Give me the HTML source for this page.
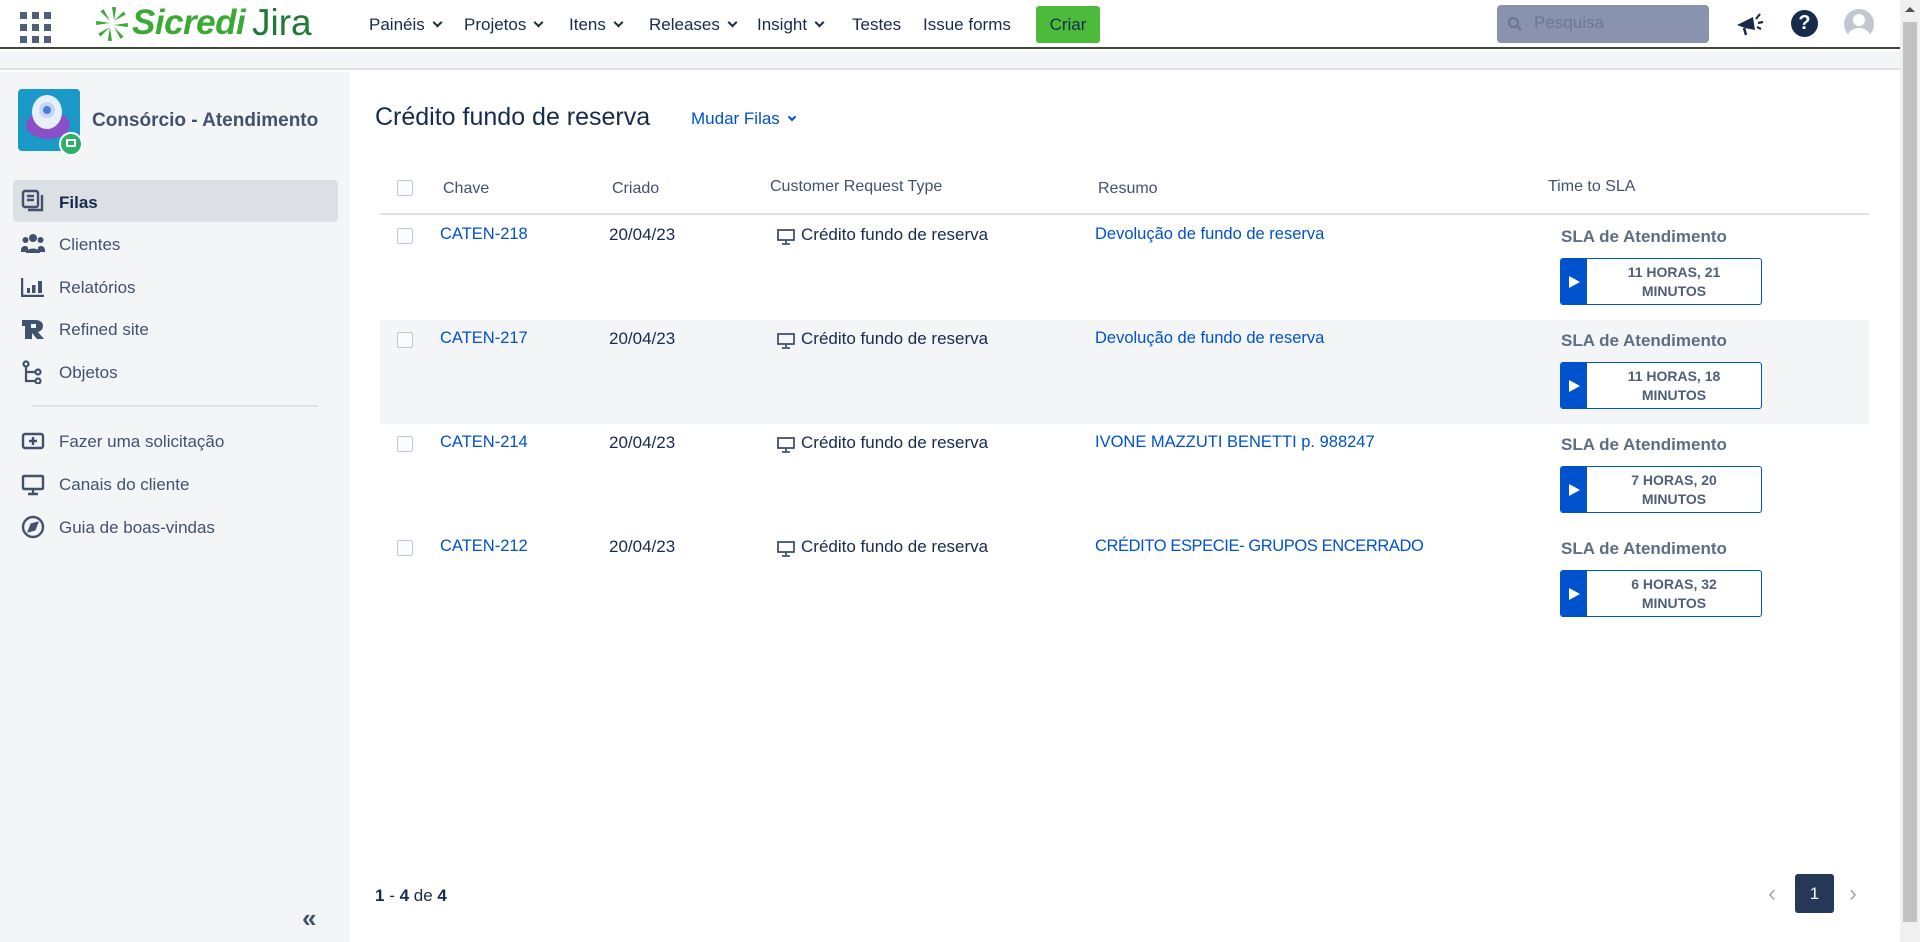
<!DOCTYPE html>
<html><head><meta charset="utf-8"><style>
*{box-sizing:border-box;margin:0;padding:0}
body{width:1920px;height:942px;overflow:hidden;background:#fff;font-family:"Liberation Sans",sans-serif;color:#172b4d;position:relative}
.a{position:absolute;white-space:nowrap}
.nav{font-size:17px;color:#172b4d;top:15px}
.chev{display:inline-block;width:7px;height:7px;border-right:2px solid #172b4d;border-bottom:2px solid #172b4d;transform:rotate(45deg);margin-left:9px;position:relative;top:-4px}
.side{font-size:17px;color:#42526e;left:59px}
.ic{position:absolute;left:21px}
.th{font-size:16px;color:#42526e;top:179px}
.cell{font-size:17px}
.link{color:#0052cc;font-size:16.5px}
.cb{position:absolute;left:397px;width:16px;height:16px;border:1px solid #c1c7d0;border-radius:2px;background:#fafbfc}
.sla{position:absolute;left:1561px;font-size:17px;font-weight:bold;color:#5e6c84}
.box{position:absolute;left:1560px;width:202px;height:47px;border:1px solid #0052cc;border-radius:3px;background:#fff;overflow:hidden}
.box .pl{position:absolute;left:0;top:0;width:26px;height:100%;background:#0052cc}
.box .pl:after{content:"";position:absolute;left:8px;top:17px;border-left:11px solid #fff;border-top:6.5px solid transparent;border-bottom:6.5px solid transparent}
.box .t{position:absolute;left:26px;right:0;top:4px;text-align:center;font-size:14px;font-weight:bold;color:#505f79;line-height:19px;white-space:normal}
</style></head><body>
<div class="a" style="left:0;top:0;width:1900px;height:49px;background:#fff;border-bottom:2px solid #3d4a3a"></div>
<svg class="a" style="left:20px;top:12px" width="31" height="31" viewBox="0 0 31 31" fill="#505f79">
<rect x="0" y="0" width="7" height="7"/><rect x="12" y="0" width="7" height="7"/><rect x="24" y="0" width="7" height="7"/>
<rect x="0" y="12" width="7" height="7"/><rect x="12" y="12" width="7" height="7"/><rect x="24" y="12" width="7" height="7"/>
<rect x="0" y="24" width="7" height="7"/><rect x="12" y="24" width="7" height="7"/><rect x="24" y="24" width="7" height="7"/></svg>
<svg class="a" style="left:94px;top:5px" width="36" height="38" viewBox="0 0 34 36">
<g fill="#3aaa35"><path d="M17 2 l4 0 -2 13z"/><path d="M17 34 l-4 0 2 -13z"/><path d="M2 19 l0 -4 13 2z"/><path d="M32 17 l0 4 -13 -2z"/>
<path d="M6 6 l3 -2 6 11z"/><path d="M28 30 l-3 2 -6 -11z"/><path d="M6 30 l-2 -3 11 -6z"/><path d="M28 6 l2 3 -11 6z"/></g></svg>
<div class="a" style="left:132px;top:3px;font-size:35px;font-weight:bold;font-style:italic;color:#3aaa35;letter-spacing:-0.5px">Sicredi</div>
<div class="a" style="left:252px;top:2px;font-size:37px;color:#1f7a3a">Jira</div>
<div class="a nav" style="left:369px">Painéis<span class="chev"></span></div>
<div class="a nav" style="left:464px">Projetos<span class="chev"></span></div>
<div class="a nav" style="left:569px">Itens<span class="chev"></span></div>
<div class="a nav" style="left:649px">Releases<span class="chev"></span></div>
<div class="a nav" style="left:757px">Insight<span class="chev"></span></div>
<div class="a nav" style="left:852px">Testes</div>
<div class="a nav" style="left:923px">Issue forms</div>
<div class="a" style="left:1036px;top:6px;width:64px;height:37px;background:#4cbb3b;border-radius:3px;color:#172b4d;font-size:17px;text-align:center;line-height:37px">Criar</div>
<div class="a" style="left:1497px;top:5px;width:212px;height:38px;background:#8993ad;border-radius:4px"></div>
<svg class="a" style="left:1507px;top:16px" width="16" height="16" viewBox="0 0 16 16"><circle cx="6.5" cy="6.5" r="4.5" stroke="#6b7795" stroke-width="2.2" fill="none"/><path d="M10 10l4 4" stroke="#6b7795" stroke-width="2.5"/></svg>
<div class="a" style="left:1534px;top:13px;font-size:17px;color:#6b7795">Pesquisa</div>
<svg class="a" style="left:1735px;top:11px" width="30" height="26" viewBox="0 0 30 26"><path d="M2 14 L18 6 L20 19 L10 17 Z" fill="#172b4d"/><path d="M9 17 l2 7" stroke="#172b4d" stroke-width="2.5"/><path d="M21 8 l4 -5 M23 12 l5 -1 M22 16 l4 2" stroke="#172b4d" stroke-width="2.2"/></svg>
<div class="a" style="left:1791px;top:10px;width:27px;height:27px;border-radius:50%;background:#172b4d;color:#fff;font-weight:bold;font-size:20px;text-align:center;line-height:27px">?</div>
<div class="a" style="left:1844px;top:9px;width:30px;height:30px;border-radius:50%;background:#c1c7d0;overflow:hidden"><div style="position:absolute;left:9px;top:5px;width:12px;height:12px;border-radius:50%;background:#fff"></div><div style="position:absolute;left:4px;top:19px;width:22px;height:16px;border-radius:50%;background:#fff"></div></div>
<div class="a" style="left:0;top:51px;width:1900px;height:19px;background:#f4f5f7;border-bottom:2px solid #dfe1e6"></div>
<div class="a" style="left:1900px;top:0;width:20px;height:942px;background:#f0f0f0"></div>
<div class="a" style="left:1903px;top:22px;width:14px;height:900px;background:#c1c1c1"></div>
<div class="a" style="left:1905px;top:7px;border-left:5px solid transparent;border-right:5px solid transparent;border-bottom:5px solid #505050"></div>
<div class="a" style="left:0;top:72px;width:350px;height:870px;background:#f4f5f7"></div>
<div class="a" style="left:18px;top:89px;width:62px;height:62px;border-radius:4px;background:#1b9ac9;overflow:hidden">
<div style="position:absolute;left:8px;top:22px;width:44px;height:28px;border-radius:50%;background:#8b50c8"></div>
<div style="position:absolute;left:14px;top:6px;width:30px;height:34px;border-radius:50%;background:#e6f0ff"></div>
<div style="position:absolute;left:21px;top:13px;width:16px;height:16px;border-radius:50%;background:#4a7cd6;border:4px solid #c5d5f5"></div></div>
<div class="a" style="left:59px;top:132px;width:24px;height:24px;border-radius:50%;background:#2fb06a;border:2px solid #fff"><div style="position:absolute;left:5px;top:5px;width:10px;height:8px;border:2px solid #fff"></div></div>
<div class="a" style="left:92px;top:110px;font-size:19px;font-weight:bold;color:#42526e">Consórcio - Atendimento</div>
<div class="a" style="left:13px;top:180px;width:325px;height:42px;background:#dcdfe4;border-radius:4px"></div>
<svg class="ic" style="top:189px" width="24" height="24" viewBox="0 0 24 24" fill="none" stroke="#42526e" stroke-width="2.4"><rect x="2" y="2" width="15" height="16" rx="2"/><path d="M6 7h7M6 11h7M21 6v15H7"/></svg>
<div class="a side" style="top:193px;font-weight:bold;color:#172b4d">Filas</div>
<svg class="ic" style="top:233px" width="24" height="22" viewBox="0 0 24 22" fill="#42526e"><circle cx="12" cy="5" r="4"/><circle cx="4.5" cy="7" r="3"/><circle cx="19.5" cy="7" r="3"/><path d="M5 20c0-6 14-6 14 0z"/><path d="M0 17c0-5 7-5 7-2v4H0z M24 17c0-5-7-5-7-2v4h7z"/></svg>
<div class="a side" style="top:235px">Clientes</div>
<svg class="ic" style="top:277px" width="24" height="20" viewBox="0 0 24 20" fill="#42526e"><path d="M1 1v18h22" stroke="#42526e" stroke-width="2.5" fill="none"/><rect x="6" y="11" width="3" height="5"/><rect x="11" y="8" width="3.5" height="8"/><rect x="17" y="4" width="4" height="12"/></svg>
<div class="a side" style="top:278px">Relatórios</div>
<svg class="ic" style="top:317px" width="24" height="24" viewBox="0 0 24 24" fill="#42526e"><path d="M1 3h13c6 0 8 3 8 6s-2 5-5 6l6 7h-7l-5-6v6H4V9H1z"/><rect x="10" y="7" width="5" height="4" fill="#f4f5f7"/></svg>
<div class="a side" style="top:320px">Refined site</div>
<svg class="ic" style="top:360px" width="24" height="24" viewBox="0 0 24 24" fill="none" stroke="#42526e" stroke-width="2.2"><circle cx="5" cy="4" r="2.5"/><path d="M5 7v14h9M5 12h9"/><circle cx="17" cy="12" r="2.5"/><circle cx="17" cy="21" r="2.5"/></svg>
<div class="a side" style="top:363px">Objetos</div>
<div class="a" style="left:32px;top:405px;width:286px;height:2px;background:#dfe1e6"></div>
<svg class="ic" style="top:432px" width="24" height="20" viewBox="0 0 24 20" fill="none" stroke="#42526e" stroke-width="2.4"><rect x="2" y="2" width="20" height="14" rx="2"/><path d="M12 5v8M8 9h8"/></svg>
<div class="a side" style="top:432px">Fazer uma solicitação</div>
<svg class="ic" style="top:474px" width="24" height="22" viewBox="0 0 24 22" fill="none" stroke="#42526e" stroke-width="2.4"><rect x="2" y="2" width="20" height="13" rx="1"/><path d="M12 15v5M7 20h10"/></svg>
<div class="a side" style="top:475px">Canais do cliente</div>
<svg class="ic" style="top:515px" width="24" height="24" viewBox="0 0 24 24" fill="none" stroke="#42526e" stroke-width="2.4"><circle cx="12" cy="12" r="10"/><path d="M8 16l2.5-6.5L16 8l-2.5 6.5z" fill="#42526e"/></svg>
<div class="a side" style="top:518px">Guia de boas-vindas</div>
<div class="a" style="left:302px;top:903px;font-size:26px;font-weight:bold;color:#42526e">«</div>
<div class="a" style="left:375px;top:103px;font-size:25px;color:#172b4d">Crédito fundo de reserva</div>
<div class="a" style="left:691px;top:109px;font-size:17px;color:#0052cc">Mudar Filas<span class="chev" style="border-color:#0052cc;width:6px;height:6px"></span></div>
<div class="cb" style="top:180px"></div>
<div class="a th" style="left:443px;top:180px">Chave</div>
<div class="a th" style="left:612px;top:180px">Criado</div>
<div class="a th" style="left:770px;top:178px">Customer Request Type</div>
<div class="a th" style="left:1098px;top:180px">Resumo</div>
<div class="a th" style="left:1548px;top:178px">Time to SLA</div>
<div class="a" style="left:380px;top:213px;width:1489px;height:2px;background:#dfe1e6"></div>
<div class="a" style="left:380px;top:320px;width:1489px;height:104px;background:#f4f5f7"></div>

<div class="cb" style="top:228px"></div>
<div class="a cell link" style="left:440px;top:225px">CATEN-218</div>
<div class="a cell" style="left:609px;top:225px">20/04/23</div>
<svg class="a" style="left:777px;top:229px" width="18" height="16" viewBox="0 0 18 16" fill="none" stroke="#42526e" stroke-width="1.8"><rect x="1" y="1" width="16" height="10"/><path d="M9 11v3M5 15h8"/></svg>
<div class="a cell" style="left:801px;top:225px">Crédito fundo de reserva</div>
<div class="a cell link" style="left:1095px;top:225px">Devolução de fundo de reserva</div>
<div class="sla" style="top:227px">SLA de Atendimento</div>
<div class="box" style="top:258px"><div class="pl"></div><div class="t">11 HORAS, 21<br>MINUTOS</div></div>

<div class="cb" style="top:332px"></div>
<div class="a cell link" style="left:440px;top:329px">CATEN-217</div>
<div class="a cell" style="left:609px;top:329px">20/04/23</div>
<svg class="a" style="left:777px;top:333px" width="18" height="16" viewBox="0 0 18 16" fill="none" stroke="#42526e" stroke-width="1.8"><rect x="1" y="1" width="16" height="10"/><path d="M9 11v3M5 15h8"/></svg>
<div class="a cell" style="left:801px;top:329px">Crédito fundo de reserva</div>
<div class="a cell link" style="left:1095px;top:329px">Devolução de fundo de reserva</div>
<div class="sla" style="top:331px">SLA de Atendimento</div>
<div class="box" style="top:362px"><div class="pl"></div><div class="t">11 HORAS, 18<br>MINUTOS</div></div>

<div class="cb" style="top:436px"></div>
<div class="a cell link" style="left:440px;top:433px">CATEN-214</div>
<div class="a cell" style="left:609px;top:433px">20/04/23</div>
<svg class="a" style="left:777px;top:437px" width="18" height="16" viewBox="0 0 18 16" fill="none" stroke="#42526e" stroke-width="1.8"><rect x="1" y="1" width="16" height="10"/><path d="M9 11v3M5 15h8"/></svg>
<div class="a cell" style="left:801px;top:433px">Crédito fundo de reserva</div>
<div class="a cell link" style="left:1095px;top:433px">IVONE MAZZUTI BENETTI p. 988247</div>
<div class="sla" style="top:435px">SLA de Atendimento</div>
<div class="box" style="top:466px"><div class="pl"></div><div class="t">7 HORAS, 20<br>MINUTOS</div></div>

<div class="cb" style="top:540px"></div>
<div class="a cell link" style="left:440px;top:537px">CATEN-212</div>
<div class="a cell" style="left:609px;top:537px">20/04/23</div>
<svg class="a" style="left:777px;top:541px" width="18" height="16" viewBox="0 0 18 16" fill="none" stroke="#42526e" stroke-width="1.8"><rect x="1" y="1" width="16" height="10"/><path d="M9 11v3M5 15h8"/></svg>
<div class="a cell" style="left:801px;top:537px">Crédito fundo de reserva</div>
<div class="a cell link" style="left:1095px;top:537px;letter-spacing:-0.4px">CRÉDITO ESPECIE- GRUPOS ENCERRADO</div>
<div class="sla" style="top:539px">SLA de Atendimento</div>
<div class="box" style="top:570px"><div class="pl"></div><div class="t">6 HORAS, 32<br>MINUTOS</div></div>

<div class="a" style="left:375px;top:886px;font-size:17px;color:#172b4d"><b>1</b> - <b>4</b> de <b>4</b></div>
<div class="a" style="left:1768px;top:880px;font-size:24px;color:#a5adba">‹</div>
<div class="a" style="left:1795px;top:874px;width:39px;height:39px;background:#253858;border-radius:3px;color:#fff;font-size:17px;text-align:center;line-height:39px">1</div>
<div class="a" style="left:1849px;top:880px;font-size:24px;color:#a5adba">›</div>
</body></html>
